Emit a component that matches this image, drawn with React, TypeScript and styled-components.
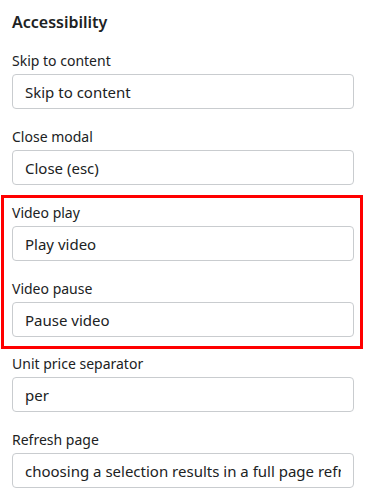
import styled, { createGlobalStyle } from "styled-components";

const GlobalStyle = createGlobalStyle`
  * { box-sizing: border-box; }
  body {
    margin: 0;
    background: #ffffff;
    font-family: "Noto Sans", "Open Sans", sans-serif;
    color: #202223;
  }
`;

const Panel = styled.div`
  width: 366px;
  padding: 12px 12px 0 12px;
  display: flex;
  flex-direction: column;
`;

const Title = styled.h2`
  margin: 0 0 19px 0;
  font-size: 16px;
  font-weight: 600;
  line-height: 20px;
`;

const Fields = styled.div`
  display: flex;
  flex-direction: column;
  gap: 18px;
`;

// red outline around a group, drawn without pushing the neighbours away
const Highlight = styled.div`
  margin: -8px -9px -13px -11px;
  padding: 5px 6px 9px 8px;
  border: 3px solid #ff0000;
  display: flex;
  flex-direction: column;
  gap: 18px;
`;

const Field = styled.label`
  display: flex;
  flex-direction: column;
  gap: 3px;
`;

const Label = styled.span`
  font-size: 14px;
  line-height: 20px;
`;

const Input = styled.input`
  width: 100%;
  height: 35px;
  padding: 0 12px;
  border: 1px solid #c9cccf;
  border-radius: 4px;
  font-family: inherit;
  font-size: 15px;
  color: #202223;
  background: #ffffff;
  outline: none;
`;

function TextField({ label, value }: { label: string; value: string }) {
  return (
    <Field>
      <Label>{label}</Label>
      <Input defaultValue={value} />
    </Field>
  );
}

export default function App() {
  return (
    <>
      <GlobalStyle />
      <Panel>
        <Title>Accessibility</Title>
        <Fields>
          <TextField label="Skip to content" value="Skip to content" />
          <TextField label="Close modal" value="Close (esc)" />
          <Highlight>
            <TextField label="Video play" value="Play video" />
            <TextField label="Video pause" value="Pause video" />
          </Highlight>
          <TextField label="Unit price separator" value="per" />
          <TextField
            label="Refresh page"
            value="choosing a selection results in a full page refresh"
          />
        </Fields>
      </Panel>
    </>
  );
}
